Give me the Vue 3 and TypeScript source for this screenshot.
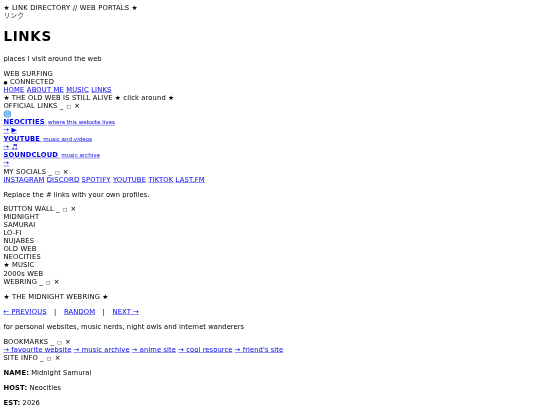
<script setup lang="ts">
const navLinks: string[] = ['HOME', 'ABOUT ME', 'MUSIC', 'LINKS']
const socials: string[] = ['INSTAGRAM', 'DISCORD', 'SPOTIFY', 'YOUTUBE', 'TIKTOK', 'LAST.FM']
const buttons: string[] = ['MIDNIGHT', 'SAMURAI', 'LO-FI', 'NUJABES', 'OLD WEB', 'NEOCITIES', '★ MUSIC', '2000s WEB']
const bookmarks: string[] = ['→ favourite website', '→ music archive', '→ anime site', '→ cool resource', "→ friend's site"]
const info: [string, string][] = [['NAME:', 'Midnight Samurai'], ['HOST:', 'Neocities'], ['EST:', '2026']]
</script>

<template>
  <main class="page">
    <div class="tall">★ LINK DIRECTORY // WEB PORTALS ★</div>
    <div class="jp">リンク</div>
    <h1>LINKS</h1>
    <p class="low">places I visit around the web</p>
    <div>WEB SURFING</div>
    <div class="tall"><span class="dot">●</span> CONNECTED</div>
    <nav><template v-for="l in navLinks" :key="l"><a href="#">{{ l }}</a>{{ ' ' }}</template></nav>
    <div class="tall alive">★ THE OLD WEB IS STILL ALIVE ★ click around ★</div>

    <section>
      <div>OFFICIAL LINKS _ <span class="box">□</span> ×</div>
      <div class="icon">
        <svg viewBox="0 0 16 16" width="19" height="19">
          <circle cx="8" cy="8" r="7.5" fill="#3f9be6" />
          <path d="M.5 8h15M8 .5v15M2 4h12M2 12h12" stroke="#cfeafc" stroke-width="1" fill="none" />
          <ellipse cx="8" cy="8" rx="3.6" ry="7.5" fill="none" stroke="#cfeafc" stroke-width="1" />
        </svg>
      </div>
      <div><a href="#"><b>NEOCITIES</b> <small>where this website lives</small></a></div>
      <div class="tall"><a href="#">→</a> <a href="#">▶</a></div>
      <div><a href="#"><b>YOUTUBE</b> <small>music and videos</small></a></div>
      <div class="tall"><a href="#">→</a> <a href="#">♬</a></div>
      <div><a href="#"><b>SOUNDCLOUD</b> <small>music archive</small></a></div>
      <div class="tall"><a href="#">→</a></div>
    </section>

    <section>
      <div>MY SOCIALS _ <span class="box">□</span> ×</div>
      <div><template v-for="s in socials" :key="s"><a href="#">{{ s }}</a>{{ ' ' }}</template></div>
      <p class="low">Replace the # links with your own profiles.</p>
    </section>

    <section>
      <div>BUTTON WALL _ <span class="box">□</span> ×</div>
      <div v-for="b in buttons" :key="b" :class="{ tall: b.startsWith('★') }">{{ b }}</div>
    </section>

    <section>
      <div>WEBRING _ <span class="box">□</span> ×</div>
      <p class="tall">★ THE MIDNIGHT WEBRING ★</p>
      <p class="ring tall"><a href="#">← PREVIOUS</a><span>|</span><a href="#">RANDOM</a><span>|</span><a href="#">NEXT →</a></p>
      <p class="low">for personal websites, music nerds, night owls and internet wanderers</p>
    </section>

    <section>
      <div>BOOKMARKS _ <span class="box">□</span> ×</div>
      <div class="tall marks"><template v-for="b in bookmarks" :key="b"><a href="#">{{ b }}</a>{{ ' ' }}</template></div>
    </section>

    <section>
      <div>SITE INFO _ <span class="box">□</span> ×</div>
      <p v-for="[k, v] in info" :key="k" class="low"><b>{{ k }}</b> {{ v }}</p>
    </section>
  </main>
</template>

<style>
html, body { overflow: hidden; height: 405px; }
</style>

<style scoped>
.page {
  width: 1280px;
  box-sizing: border-box;
  padding: 8px;
  font-family: "DejaVu Sans", sans-serif;
  font-size: 16px;
  line-height: 19px;
  letter-spacing: 0.4px;
  color: #000;
  transform: scale(0.421875);
  transform-origin: 0 0;
  filter: blur(0.7px);
}
.tall { line-height: 20px; }
.jp { font-family: "DejaVu Sans", "Noto Sans CJK JP", sans-serif; color: #333; }
h1 { font-size: 32px; line-height: 39px; margin: 21.44px 0; font-weight: bold; letter-spacing: 1.6px; }
p { margin: 16px 0; }
a { color: #0000ee; text-decoration: underline; }
small { font-size: 13.33px; letter-spacing: -0.05px; line-height: 0; margin-left: 2px; }
b { letter-spacing: 0.35px; }
.low { letter-spacing: 0.1px; }
.alive { letter-spacing: 0.3px; }
.marks { letter-spacing: 0.2px; }
.dot { font-size: 11px; line-height: 0; }
.box { font-size: 11px; margin: 0 2px; line-height: 0; }
.icon { height: 19px; line-height: 0; }
.ring { letter-spacing: 0.3px; }
.ring span { margin: 0 17.7px; }
</style>
